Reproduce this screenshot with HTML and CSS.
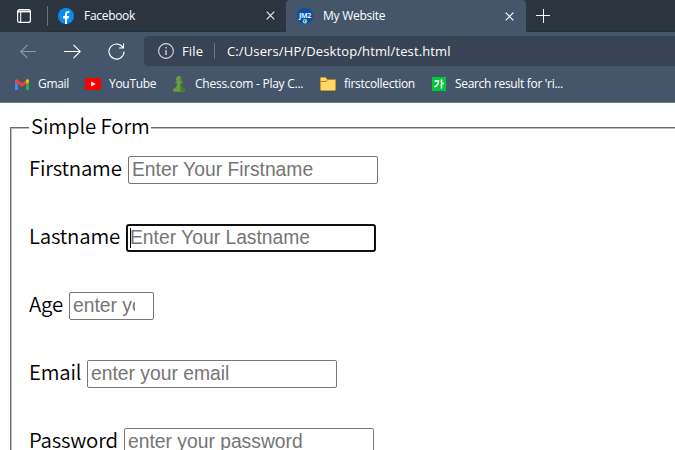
FILE: index.html
```html
<!DOCTYPE html>
<html lang="en">
<head>
<meta charset="utf-8">
<title>My Website</title>
<link rel="stylesheet" href="styles.css">
</head>
<body>
<header class="browser">
  <div class="tabs">
    <div class="tab-tools">
      <svg class="tab-menu" width="14" height="14" viewBox="0 0 14 14" fill="none" stroke="#fff"><rect x=".6" y=".6" width="12.8" height="12.8" rx="2" stroke-width="1.2"/><path d="M1 2.500h12" stroke-width="1.8"/><path d="M3.700 3v10" stroke-width="1"/></svg>
      <span class="divider"></span>
    </div>
    <div class="tab">
      <svg width="16" height="16" viewBox="0 0 16 16"><circle cx="8" cy="8" r="8" fill="#078cf5"/><path d="M7 16v-5.600H5V8h2V6.300C7 4.200 8.200 3 10.100 3l1.200.1v2h-1C9.300 5.100 9 5.700 9 6.400V8h2.200l-.4 2.400H9V16z" fill="#fff"/></svg>
      <span class="label facebook">Facebook</span>
      <svg class="close" width="9" height="9" viewBox="0 0 9 9"><path d="M.7.7l7.600 7.600M8.300.7L.7 8.300" stroke="#e8eaed" stroke-width="1.200"/></svg>
    </div>
    <div class="tab active">
      <svg width="16" height="16" viewBox="0 0 16 16"><circle cx="8" cy="8" r="8" fill="#0752a3"/><text class="badge-text" x="8" y="10">JM2</text><circle cx="8" cy="13.200" r="2.200" fill="#a8dce8"/><path d="M6.500 12.200l1.500-.8.500 1.500-1 1.500zM9 13.200l1-.5-.5 1.500z" fill="#348c47"/></svg>
      <span class="label website">My Website</span>
      <svg class="close" width="9" height="9" viewBox="0 0 9 9"><path d="M.7.7l7.600 7.600M8.300.7L.7 8.300" stroke="#fff" stroke-width="1.200"/></svg>
    </div>
    <div class="new-tab">
      <svg width="14" height="14" viewBox="0 0 14 14"><path d="M7.500 0v14M0 6.500h14" stroke="#fff"/></svg>
    </div>
  </div>
  <div class="toolbar">
    <svg class="back" width="17" height="15" viewBox="0 0 17 15" fill="none" stroke="#8d98a5" stroke-width="1.100"><path d="M16 7.500H1M7.500.8L.8 7.500l6.700 6.700"/></svg>
    <svg class="forward" width="17" height="15" viewBox="0 0 17 15" fill="none" stroke="#fff" stroke-width="1.100"><path d="M0 7.500h16M9.500.8l6.700 6.700-6.700 6.700"/></svg>
    <svg class="reload" width="17" height="17" viewBox="0 0 17 17" fill="none" stroke="#fff" stroke-width="1.100"><path d="M15.100 5A7.500 7.500 0 1 0 16 8.500M15.500.5V5H11"/></svg>
    <div class="address">
      <svg width="16" height="16" viewBox="0 0 16 16" fill="none" stroke="#d7dce1"><circle cx="8" cy="8" r="7.400" stroke-width="1.100"/><path d="M8 7v5M8 4v1.500" stroke-width="1.300"/></svg>
      <span class="label file">File</span>
      <span class="address-divider"></span>
      <span class="label url">C:/Users/HP/Desktop/html/test.html</span>
    </div>
  </div>
  <nav class="bookmarks">
    <a class="mark gmail"><svg width="14" height="11" viewBox="0 0 14 11"><path d="M0 1v10h3V4z" fill="#4285f4"/><path d="M14 1v10h-3V4z" fill="#34a853"/><path d="M0 1.500C0 0 2 0 3 .8l4 3.400 4-3.400V4.500L7 8 3 4.800 0 3z" fill="#ea4335"/><path d="M11 .8c1-.8 3-.8 3 .7V3l-3 2z" fill="#fbbc04"/></svg><span class="label">Gmail</span></a>
    <a class="mark youtube"><svg width="16" height="12" viewBox="0 0 16 12"><rect width="16" height="12" rx="2.200" fill="#f00"/><path d="M6.200 3.500v5l4.500-2.500z" fill="#fff"/></svg><span class="label">YouTube</span></a>
    <a class="mark chess"><svg width="12" height="16" viewBox="0 0 12 16"><path d="M6 0a3 3 0 0 1 2 5.200l1.600 1v1H8c0 3 1 4.300 3 5.300 1 1 .8 2.800.5 3.300H.5c-.3-.5-.5-2.300.5-3.300 2-1 3-2.300 3-5.300H2.400v-1l1.600-1A3 3 0 0 1 6 0z" fill="#679f40"/><path d="M7 1a2 2 0 0 1 0 4zM7 7h1c0 3 1 4.300 3 5.300 1 1 .8 2.800.5 3.300H7.500z" fill="#477c30"/></svg><span class="label">Chess.com - Play C...</span></a>
    <a class="mark folder"><svg width="16" height="14" viewBox="0 0 16 14"><path d="M.5 1.500q0-1 1-1h4l1.500 2h7.500q1 0 1 1v9q0 1-1 1h-13q-1 0-1-1z" fill="#ffd76b" stroke="#d49a20"/><path d="M1 4.500h5l1.500-2h7" fill="none" stroke="#bb8013"/></svg><span class="label">firstcollection</span></a>
    <a class="mark search"><svg width="14" height="14" viewBox="0 0 14 14"><rect width="14" height="14" rx="1" fill="#03c83b"/><path d="M2.500 4h4q0 4-4 6M9.500 2.500v9M9.500 6.500H12" fill="none" stroke="#fff" stroke-width="1.500"/></svg><span class="label">Search result for 'ri...</span></a>
  </nav>
</header>
<main>
  <form>
    <fieldset>
      <legend>Simple Form</legend>
      <div class="row"><label class="firstname" for="firstname">Firstname</label><input id="firstname" type="text" placeholder="Enter Your Firstname"></div>
      <div class="row"><label class="lastname" for="lastname">Lastname</label><div class="focused"><input id="lastname" type="text" placeholder="Enter Your Lastname"><span class="caret"></span></div></div>
      <div class="row"><label class="age-label" for="age">Age</label><input class="age" id="age" type="text" placeholder="enter your age"></div>
      <div class="row"><label class="email-label" for="email">Email</label><input id="email" type="email" placeholder="enter your email"></div>
      <div class="row"><label class="password-label" for="password">Password</label><input id="password" type="password" placeholder="enter your password"></div>
    </fieldset>
  </form>
</main>
</body>
</html>
```
FILE: styles.css
```css
* { box-sizing: border-box; }
html, body { height: 100%; }
body { margin: 0; overflow: hidden; background: #fff; color: #000; }
svg { display: block; flex: none; }
.browser { height: 103px; background: #46566a; border-bottom: 1px solid #6c7989; color: #fff; font: 12px/16px "Open Sans", sans-serif; }
.label { white-space: nowrap; flex: none; }
.tabs { height: 32px; display: flex; background: #2b3540; }
.tab-tools { width: 48px; display: flex; align-items: center; padding-left: 17px; }
.divider { width: 1px; height: 20px; margin-left: 16px; background: #66717c; }
.tab { width: 238px; display: flex; align-items: center; padding: 0 11px 0 10px; border-bottom: 1px solid #25303b; letter-spacing: -.3px; }
.tab .label { margin-left: 10px; }
.tab .close { margin-left: auto; }
.tab.active { width: 240px; padding: 0 12px 0 11px; background: #46566a; border: 0; border-radius: 4px 4px 0 0; letter-spacing: -.25px; }
.badge-text { font: bold 7px "Open Sans", sans-serif; fill: #e9f3fd; text-anchor: middle; }
.new-tab { flex: 1; padding: 9px 0 0 10px; border-bottom: 1px solid #25303b; border-radius: 0 0 0 3px; }
.toolbar { height: 38px; display: flex; align-items: center; padding-left: 20px; }
.forward { margin-left: 27px; }
.reload { margin-left: 27px; }
.address { height: 30px; flex: 1; display: flex; align-items: center; margin-left: 19px; padding-left: 14px; background: #384453; border-radius: 4px 0 0 4px; font-size: 13px; letter-spacing: .12px; }
.file { width: 22px; margin-left: 8px; }
.address-divider { width: 1px; height: 16px; margin: 0 12px 0 10px; background: #6b7684; }
.bookmarks { height: 28px; display: flex; align-items: center; padding-left: 15px; letter-spacing: -.3px; }
.mark { display: flex; align-items: center; flex: none; }
.gmail { width: 70px; gap: 9px; }
.youtube { width: 88px; gap: 8px; }
.chess { width: 147px; gap: 10px; letter-spacing: -.25px; }
.folder { width: 112px; gap: 8px; }
.search { gap: 9px; letter-spacing: -.32px; }
main { height: calc(100% - 103px); padding: 12px 0 0 10px; overflow: hidden; }
form { height: 100%; }
fieldset { height: 100%; margin: 0; padding: 0 0 0 17px; border: 2px groove #c0c0c0; border-right: 0; border-bottom: 0; font: 350 20.4px/24px "Noto Sans CJK SC", sans-serif; letter-spacing: -.2px; }
legend { height: 26px; padding: 0 1px 0 2px; line-height: 20px; letter-spacing: -.1px; }
.row { height: 28px; display: flex; align-items: center; margin-bottom: 40px; }
.row:first-of-type { margin-top: 15px; }
.row:last-child { margin-bottom: 0; }
.row label { white-space: nowrap; flex: none; padding-bottom: 7px; }
.firstname { width: 99px; }
.lastname { width: 97px; }
.age-label { width: 40px; }
.email-label { width: 58px; }
.password-label { width: 95px; }
input { display: block; width: 250px; height: 28px; margin: 0; padding: 0 3px; border: 1px solid #767676; border-radius: 2px; background: #fff; font: 19.3px "Liberation Sans", sans-serif; outline: 0; }
input::placeholder { color: #757575; }
.focused { position: relative; }
.focused input { border: 2px solid #101010; border-radius: 3px; padding-left: 2px; }
.caret { position: absolute; left: 4px; top: 4px; width: 1px; height: 20px; background: #000; }
.age { width: 85px; padding: 0 18px 0 3px; }
```
